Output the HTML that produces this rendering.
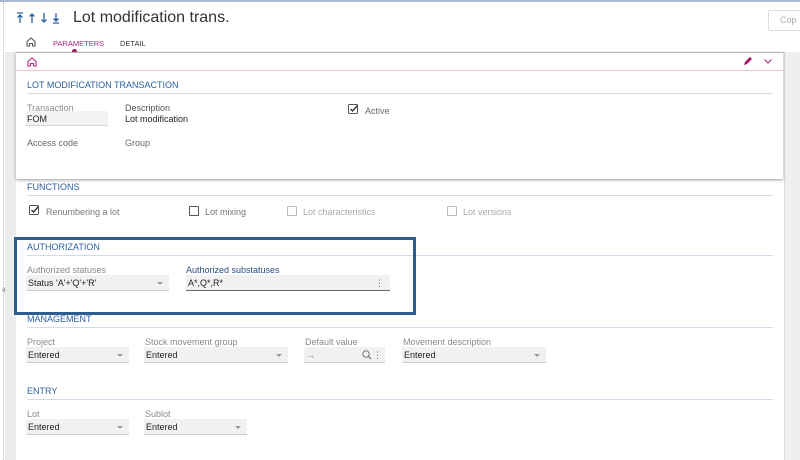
<!DOCTYPE html>
<html><head><style>
body{margin:0;width:800px;height:460px;position:relative;overflow:hidden;background:#fff;font-family:"Liberation Sans",sans-serif;}
.a{position:absolute;white-space:nowrap}
.lbl{font-size:9px;color:#8a8a8a}
.val{font-size:9px;color:#222}
.sec{font-size:9px;color:#2b5f9e}
.line{position:absolute;height:1px;background:#cfdcec}
.fld{position:absolute;height:15px;background:#f1f1f1;border-bottom:1px solid #ccc}
.fld span{position:absolute;left:2px;top:3px;font-size:9px;color:#222}
.dd{position:absolute;right:6px;top:7px;width:0;height:0;border-left:3px solid transparent;border-right:3px solid transparent;border-top:3px solid #999}
.cb{position:absolute;width:8px;height:8px;border:1px solid #555;border-radius:1px}
</style></head><body>
<div class="a" style="left:0;top:0;width:800px;height:2px;background:#a9b9cf"></div>
<div class="a" style="left:3px;top:2px;width:0;height:458px;border-left:1px dotted #bbb"></div>
<div class="a" style="left:5px;top:52px;width:11px;height:408px;background:#ececec"></div>
<div class="a" style="left:784px;top:52px;width:16px;height:408px;background:#efefef;border-left:1px solid #ddd"></div>
<!-- header -->
<svg class="a" style="left:16px;top:12px" width="48" height="12" viewBox="0 0 48 12" fill="none" stroke="#2b5f9e" stroke-width="1.3">
<path d="M1 1h6M4 11V3M1.5 5.5L4 3l2.5 2.5"/>
<path d="M16 11V2M13.5 4.5L16 2l2.5 2.5"/>
<path d="M28 1v9M25.5 7.5L28 10l2.5-2.5"/>
<path d="M40 1v8M37.5 6.5L40 9l2.5-2.5M37 11h6"/>
</svg>
<div class="a" style="left:73px;top:9px;font-size:16px;color:#333">Lot modification trans.</div>
<div class="a" style="left:768px;top:10px;width:40px;height:19px;border:1px solid #ddd;border-radius:2px;font-size:9px;color:#aaa;line-height:19px;padding-left:11px">Cop</div>
<svg class="a" style="left:26px;top:37px" width="10" height="10" viewBox="0 0 10 10"><path d="M1 9V4.5L5 1l4 3.5V9H6.5V6.5h-3V9z" fill="none" stroke="#555" stroke-width="1.1"/></svg>
<div class="a" style="left:53px;top:39px;font-size:7.5px;color:#b0257a">PARAMETERS</div>
<div class="a" style="left:72px;top:49px;width:5px;height:5px;border-radius:50%;background:#a0155e"></div>
<div class="a" style="left:120px;top:39px;font-size:7.5px;color:#333">DETAIL</div>
<div class="a" style="left:16px;top:52px;width:768px;height:1px;background:#bbb;box-shadow:0 1px 2px #aaa"></div>
<!-- card -->
<div class="a" style="left:16px;top:53px;width:767px;height:126px;background:#fff;box-shadow:0 1px 3px #999"></div>
<svg class="a" style="left:27px;top:57px" width="10" height="10" viewBox="0 0 10 10"><path d="M1 9V4.5L5 1l4 3.5V9H6.5V6.5h-3V9z" fill="none" stroke="#b0257a" stroke-width="1.1"/></svg>
<svg class="a" style="left:743px;top:57px" width="10" height="9" viewBox="0 0 10 9"><path d="M1 8l1-3 5-5 2 2-5 5z" fill="#a0155e"/></svg>
<svg class="a" style="left:764px;top:59px" width="8" height="5" viewBox="0 0 8 5"><path d="M0.5 0.5L4 4l3.5-3.5" fill="none" stroke="#b0257a" stroke-width="1.1"/></svg>
<div class="a" style="left:16px;top:70px;width:767px;height:1px;background:#f0c3dc"></div>
<div class="a sec" style="left:27px;top:80px">LOT MODIFICATION TRANSACTION</div>
<div class="line" style="left:27px;top:93px;width:746px"></div>
<div class="a lbl" style="left:27px;top:103px">Transaction</div>
<div class="a" style="left:26px;top:111px;width:82px;height:14px;background:#f3f3f3;border-bottom:1px dotted #bbb"></div>
<div class="a val" style="left:27px;top:114px">FOM</div>
<div class="a lbl" style="left:125px;top:103px;color:#555">Description</div>
<div class="a val" style="left:125px;top:114px">Lot modification</div>
<svg class="a" style="left:348px;top:104px" width="11" height="11" viewBox="0 0 11 11"><rect x="0.5" y="0.5" width="9" height="9" rx="1" fill="none" stroke="#555"/><path d="M2.5 5l2 2L9.5 1.5" fill="none" stroke="#333" stroke-width="1.4"/></svg>
<div class="a lbl" style="left:365px;top:106px;color:#666">Active</div>
<div class="a lbl" style="left:27px;top:138px;color:#666">Access code</div>
<div class="a lbl" style="left:125px;top:138px;color:#666">Group</div>
<!-- functions -->
<div class="a sec" style="left:27px;top:182px">FUNCTIONS</div>
<div class="line" style="left:27px;top:195px;width:746px"></div>
<svg class="a" style="left:29px;top:205px" width="11" height="11" viewBox="0 0 11 11"><rect x="0.5" y="0.5" width="9" height="9" rx="1" fill="none" stroke="#555"/><path d="M2.5 5l2 2L9.5 1.5" fill="none" stroke="#333" stroke-width="1.4"/></svg>
<div class="a lbl" style="left:46px;top:207px;color:#777">Renumbering a lot</div>
<div class="cb" style="left:189px;top:206px"></div>
<div class="a lbl" style="left:205px;top:207px;color:#777">Lot mixing</div>
<div class="cb" style="left:287px;top:206px;border-color:#bbb"></div>
<div class="a lbl" style="left:303px;top:207px;color:#aaa">Lot characteristics</div>
<div class="cb" style="left:447px;top:206px;border-color:#bbb"></div>
<div class="a lbl" style="left:463px;top:207px;color:#aaa">Lot versions</div>
<!-- authorization -->
<div class="a sec" style="left:27px;top:242px">AUTHORIZATION</div>
<div class="line" style="left:27px;top:255px;width:746px"></div>
<div class="a" style="left:14px;top:237px;width:396px;height:72px;border:3px solid #2d5d8e"></div>
<div class="a lbl" style="left:27px;top:265px">Authorized statuses</div>
<div class="fld" style="left:26px;top:275px;width:143px"><span>Status 'A'+'Q'+'R'</span><i class="dd"></i></div>
<div class="a lbl" style="left:186px;top:265px;color:#2b4f7e">Authorized substatuses</div>
<div class="fld" style="left:186px;top:275px;width:204px;border-bottom-color:#666"><span>A*,Q*,R*</span><i class="a" style="right:6px;top:3px;font-size:9px;color:#666;font-style:normal">⋮</i></div>
<div class="a" style="left:2px;top:287px;width:0;height:0;border-top:3px solid transparent;border-bottom:3px solid transparent;border-right:3px solid #aaa"></div>
<!-- management -->
<div class="a sec" style="left:27px;top:314px">MANAGEMENT</div>
<div class="line" style="left:27px;top:327px;width:746px"></div>
<div class="a lbl" style="left:27px;top:337px">Project</div>
<div class="fld" style="left:26px;top:347px;width:103px"><span>Entered</span><i class="dd"></i></div>
<div class="a lbl" style="left:145px;top:337px">Stock movement group</div>
<div class="fld" style="left:144px;top:347px;width:144px"><span>Entered</span><i class="dd"></i></div>
<div class="a lbl" style="left:305px;top:337px">Default value</div>
<div class="fld" style="left:304px;top:347px;width:81px"><span style="color:#888">→</span>
<svg class="a" style="right:13px;top:3px" width="10" height="10" viewBox="0 0 10 10"><circle cx="4" cy="4" r="3.2" fill="none" stroke="#777" stroke-width="1"/><path d="M6.3 6.3L9 9" stroke="#777" stroke-width="1.2"/></svg>
<i class="a" style="right:3px;top:3px;font-size:9px;color:#666;font-style:normal">⋮</i></div>
<div class="a lbl" style="left:403px;top:337px">Movement description</div>
<div class="fld" style="left:402px;top:347px;width:144px"><span>Entered</span><i class="dd"></i></div>
<!-- entry -->
<div class="a sec" style="left:27px;top:386px">ENTRY</div>
<div class="line" style="left:27px;top:399px;width:746px"></div>
<div class="a lbl" style="left:27px;top:409px">Lot</div>
<div class="fld" style="left:26px;top:419px;width:103px"><span>Entered</span><i class="dd"></i></div>
<div class="a lbl" style="left:145px;top:409px">Sublot</div>
<div class="fld" style="left:144px;top:419px;width:103px"><span>Entered</span><i class="dd"></i></div>
</body></html>
